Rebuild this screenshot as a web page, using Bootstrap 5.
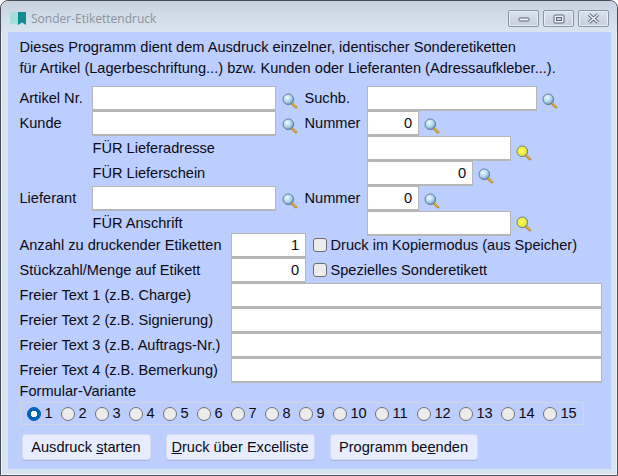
<!DOCTYPE html>
<html lang="de">
<head>
<meta charset="utf-8">
<title>Sonder-Etikettendruck</title>
<link href="https://cdn.jsdelivr.net/npm/bootstrap@5.3.0/dist/css/bootstrap.min.css" rel="stylesheet">
<style>
html,body{margin:0;height:476px;overflow:hidden;background:#fff;}
body{font-family:"Liberation Sans",Arial,sans-serif;font-size:14.6px;color:#0a0a14;line-height:1.2;}
.fenster{width:618px;height:476px;border:1px solid #4a4f55;border-width:1px 1.5px 1.5px 1.5px;border-radius:8px 8px 0 0;background:#d8e4f0;display:flex;flex-direction:column;padding:0 6.5px 6px 6.5px;box-shadow:inset 0 0 0 1px #eef4fa;}
.titelleiste{height:31px;flex:none;margin:0 -6.5px;padding:0 8px 0 9px;border-radius:8px 8px 0 0;background:linear-gradient(#c4d0dc 0,#cfdbe6 12px,#d8e4f0 31px);}
.titel-text{font-family:"Open Sans","Noto Sans",sans-serif;font-size:12px;color:#8b9298;margin-left:4px;margin-top:6px;}
.fenster-knopf{width:31px;height:17px;border:1px solid #8a949e;border-radius:2px;background:linear-gradient(#d9e3ec,#c3cfda);box-shadow:inset 0 0 0 1px #e6edf3;margin-top:9px;}
.klient{flex:1;background:#bccefe;padding:3.5px 8px 0 12px;}
.intro{height:50px;line-height:21px;padding-top:1px;margin:0;white-space:nowrap;}
.zeile{height:25px;white-space:nowrap;}
.zeile>span,.zeile>label{padding-top:1.5px;}
.zeile-kurz{height:22px;}
.lbl-a{width:72px;}
.lbl-b{width:62px;}
.lbl-f{width:275px;padding-left:1px;}
.lbl-t{width:211px;}
.feld.form-control{height:25px;flex:none;padding:1.5px 5.5px 0;border:1px solid #b6b6b8;border-bottom-width:2px;border-radius:0;background:#fff;font-size:14.6px;line-height:1;text-align:right;color:#0a0a14;box-shadow:none;min-height:0;}
.b184{width:184px;}.b170{width:170px;}.b52{width:52px;}.b144{width:144px;}.b106{width:106px;}.b75{width:75px;}.b371{width:371px;}
.lupe{flex:none;margin:0 0 0 5px;width:16px;height:16px;position:relative;top:3px;}
.lupe-a{margin:0 7px 0 6px;}
.lupe-gelb{top:5px;}
.haken.form-check-input{width:14px;height:14px;margin:0 4px 0 7px;border:1px solid #6f6f72;border-radius:3px;background-color:#ececec;flex:none;}
.radiobox{height:23px;margin-top:2px;width:564px;border:1px solid #d2d6e2;padding-left:6px;}
.radio-eintrag{width:34px;flex:none;}
.radio-eintrag.breit{width:42px;}
.kreis.form-check-input{width:14px;height:14px;margin:0 4px 0 0;border:1px solid #6f6f72;background-color:#ececec;flex:none;}
.kreis.form-check-input:checked{background-color:#0062b8;border-color:#0062b8;background-image:radial-gradient(circle,#fff 0 3px,transparent 3.5px);}
.knopfreihe{margin-top:9px;margin-left:2px;gap:15px;}
.aktion.btn{height:26px;padding:0;font-size:14.6px;line-height:24px;color:#0a0a14;background:#e7ecfe;border:1px solid #d3daf2;border-radius:3px;box-shadow:0 1px 0 #a9b8e0;white-space:nowrap;}
.w129{width:129px;}.w149{width:149px;}.w148{width:148px;}
.titel-zeichen{flex:none;margin-top:3px;}
</style>
</head>
<body>
<svg width="0" height="0" class="d-block" aria-hidden="true">
<defs>
<radialGradient id="gb" cx="0.4" cy="0.35" r="0.7"><stop offset="0" stop-color="#f1fbff"/><stop offset="0.6" stop-color="#a9cfe6"/><stop offset="1" stop-color="#5c84a8"/></radialGradient>
<radialGradient id="gg" cx="0.45" cy="0.45" r="0.6"><stop offset="0" stop-color="#fdfd70"/><stop offset="0.7" stop-color="#ecec30"/><stop offset="1" stop-color="#a8a850"/></radialGradient>
<symbol id="lupe-b" viewBox="0 0 16 16"><path d="M9.6 9.8L14 14.2" stroke="#a87a1c" stroke-width="2.6" stroke-linecap="round"/><path d="M10 9.8L14.2 14" stroke="#f0c040" stroke-width="1.1" stroke-linecap="round"/><circle cx="6.3" cy="6.3" r="5.3" fill="url(#gb)" stroke="#5f7f9c" stroke-width="1"/></symbol>
<symbol id="lupe-g" viewBox="0 0 16 16"><path d="M9.6 9.8L14 14.2" stroke="#a87a1c" stroke-width="2.6" stroke-linecap="round"/><path d="M10 9.8L14.2 14" stroke="#f0c040" stroke-width="1.1" stroke-linecap="round"/><circle cx="6.3" cy="6.3" r="5.3" fill="url(#gg)" stroke="#6a8094" stroke-width="1"/></symbol>
</defs>
</svg>
<div class="fenster">
  <div class="titelleiste d-flex align-items-center">
    <svg class="titel-zeichen" width="17" height="13" viewBox="0 0 17 13"><path d="M0 0H8V13L4 11L0 13Z" fill="#a6ded8"/><path d="M8 0H16V13L12 10.5L8 13Z" fill="#128c8c"/></svg>
    <div class="titel-text">Sonder-Etikettendruck</div>
    <div class="ms-auto d-flex gap-1 align-self-start">
      <div class="fenster-knopf d-flex align-items-center justify-content-center"><svg width="12" height="6" viewBox="0 0 12 6"><rect x="1" y="2" width="10" height="3" rx="1" fill="#eef2f6" stroke="#5d6670"/></svg></div>
      <div class="fenster-knopf d-flex align-items-center justify-content-center"><svg width="12" height="10" viewBox="0 0 12 10"><rect x="1" y="1" width="10" height="8" rx="1" fill="#eef2f6" stroke="#5d6670"/><rect x="3.5" y="3.5" width="5" height="3" fill="#c8d2dc" stroke="#5d6670"/></svg></div>
      <div class="fenster-knopf d-flex align-items-center justify-content-center"><svg width="13" height="11" viewBox="0 0 13 11"><path d="M2 1.5L11 9.5M11 1.5L2 9.5" stroke="#5d6670" stroke-width="3.4"/><path d="M2 1.5L11 9.5M11 1.5L2 9.5" stroke="#eef2f6" stroke-width="1.6"/></svg></div>
    </div>
  </div>
  <div class="klient">
    <p class="intro">Dieses Programm dient dem Ausdruck einzelner, identischer Sonderetiketten<br>für Artikel (Lagerbeschriftung...) bzw. Kunden oder Lieferanten (Adressaufkleber...).</p>

    <div class="zeile d-flex align-items-center"><span class="lbl-a">Artikel Nr.</span><input class="feld form-control b184" aria-label="Artikel Nr."><svg class="lupe lupe-a"><use href="#lupe-b"/></svg><span class="lbl-b">Suchb.</span><input class="feld form-control b170" aria-label="Suchb."><svg class="lupe"><use href="#lupe-b"/></svg></div>
    <div class="zeile d-flex align-items-center"><span class="lbl-a">Kunde</span><input class="feld form-control b184" aria-label="Kunde"><svg class="lupe lupe-a"><use href="#lupe-b"/></svg><span class="lbl-b">Nummer</span><input class="feld form-control b52" value="0" aria-label="Nummer"><svg class="lupe"><use href="#lupe-b"/></svg></div>
    <div class="zeile d-flex align-items-center"><span class="lbl-a"></span><span class="lbl-f">FÜR Lieferadresse</span><input class="feld form-control b144" aria-label="FÜR Lieferadresse"><svg class="lupe lupe-gelb"><use href="#lupe-g"/></svg></div>
    <div class="zeile d-flex align-items-center"><span class="lbl-a"></span><span class="lbl-f">FÜR Lieferschein</span><input class="feld form-control b106" value="0" aria-label="FÜR Lieferschein"><svg class="lupe"><use href="#lupe-b"/></svg></div>
    <div class="zeile d-flex align-items-center"><span class="lbl-a">Lieferant</span><input class="feld form-control b184" aria-label="Lieferant"><svg class="lupe lupe-a"><use href="#lupe-b"/></svg><span class="lbl-b">Nummer</span><input class="feld form-control b52" value="0" aria-label="Nummer"><svg class="lupe"><use href="#lupe-b"/></svg></div>
    <div class="zeile zeile-kurz d-flex align-items-start"><span class="lbl-a"></span><span class="lbl-f pt-1">FÜR Anschrift</span><input class="feld form-control b144" aria-label="FÜR Anschrift"><svg class="lupe lupe-gelb"><use href="#lupe-g"/></svg></div>

    <div class="zeile d-flex align-items-center"><span class="lbl-t">Anzahl zu druckender Etiketten</span><input class="feld form-control b75" value="1" aria-label="Anzahl"><input type="checkbox" class="haken form-check-input" id="k1"><label for="k1">Druck im Kopiermodus (aus Speicher)</label></div>
    <div class="zeile d-flex align-items-center"><span class="lbl-t">Stückzahl/Menge auf Etikett</span><input class="feld form-control b75" value="0" aria-label="Stückzahl"><input type="checkbox" class="haken form-check-input" id="k2"><label for="k2">Spezielles Sonderetikett</label></div>
    <div class="zeile d-flex align-items-center"><span class="lbl-t">Freier Text 1 (z.B. Charge)</span><input class="feld form-control b371" aria-label="Freier Text 1"></div>
    <div class="zeile d-flex align-items-center"><span class="lbl-t">Freier Text 2 (z.B. Signierung)</span><input class="feld form-control b371" aria-label="Freier Text 2"></div>
    <div class="zeile d-flex align-items-center"><span class="lbl-t">Freier Text 3 (z.B. Auftrags-Nr.)</span><input class="feld form-control b371" aria-label="Freier Text 3"></div>
    <div class="zeile d-flex align-items-center"><span class="lbl-t">Freier Text 4 (z.B. Bemerkung)</span><input class="feld form-control b371" aria-label="Freier Text 4"></div>

    <div class="mt-0">Formular-Variante</div>
    <div class="radiobox d-flex align-items-center">
      <label class="radio-eintrag d-flex align-items-center"><input type="radio" name="v" class="kreis form-check-input" checked>1</label>
      <label class="radio-eintrag d-flex align-items-center"><input type="radio" name="v" class="kreis form-check-input">2</label>
      <label class="radio-eintrag d-flex align-items-center"><input type="radio" name="v" class="kreis form-check-input">3</label>
      <label class="radio-eintrag d-flex align-items-center"><input type="radio" name="v" class="kreis form-check-input">4</label>
      <label class="radio-eintrag d-flex align-items-center"><input type="radio" name="v" class="kreis form-check-input">5</label>
      <label class="radio-eintrag d-flex align-items-center"><input type="radio" name="v" class="kreis form-check-input">6</label>
      <label class="radio-eintrag d-flex align-items-center"><input type="radio" name="v" class="kreis form-check-input">7</label>
      <label class="radio-eintrag d-flex align-items-center"><input type="radio" name="v" class="kreis form-check-input">8</label>
      <label class="radio-eintrag d-flex align-items-center"><input type="radio" name="v" class="kreis form-check-input">9</label>
      <label class="radio-eintrag breit d-flex align-items-center"><input type="radio" name="v" class="kreis form-check-input">10</label>
      <label class="radio-eintrag breit d-flex align-items-center"><input type="radio" name="v" class="kreis form-check-input">11</label>
      <label class="radio-eintrag breit d-flex align-items-center"><input type="radio" name="v" class="kreis form-check-input">12</label>
      <label class="radio-eintrag breit d-flex align-items-center"><input type="radio" name="v" class="kreis form-check-input">13</label>
      <label class="radio-eintrag breit d-flex align-items-center"><input type="radio" name="v" class="kreis form-check-input">14</label>
      <label class="radio-eintrag breit d-flex align-items-center"><input type="radio" name="v" class="kreis form-check-input">15</label>
    </div>
    <div class="knopfreihe d-flex">
      <button type="button" class="aktion btn w129">Ausdruck <u>s</u>tarten</button>
      <button type="button" class="aktion btn w149"><u>D</u>ruck über Excelliste</button>
      <button type="button" class="aktion btn w148">Programm be<u>e</u>nden</button>
    </div>
  </div>
</div>
<script src="https://cdn.jsdelivr.net/npm/bootstrap@5.3.0/dist/js/bootstrap.bundle.min.js"></script>
</body>
</html>
